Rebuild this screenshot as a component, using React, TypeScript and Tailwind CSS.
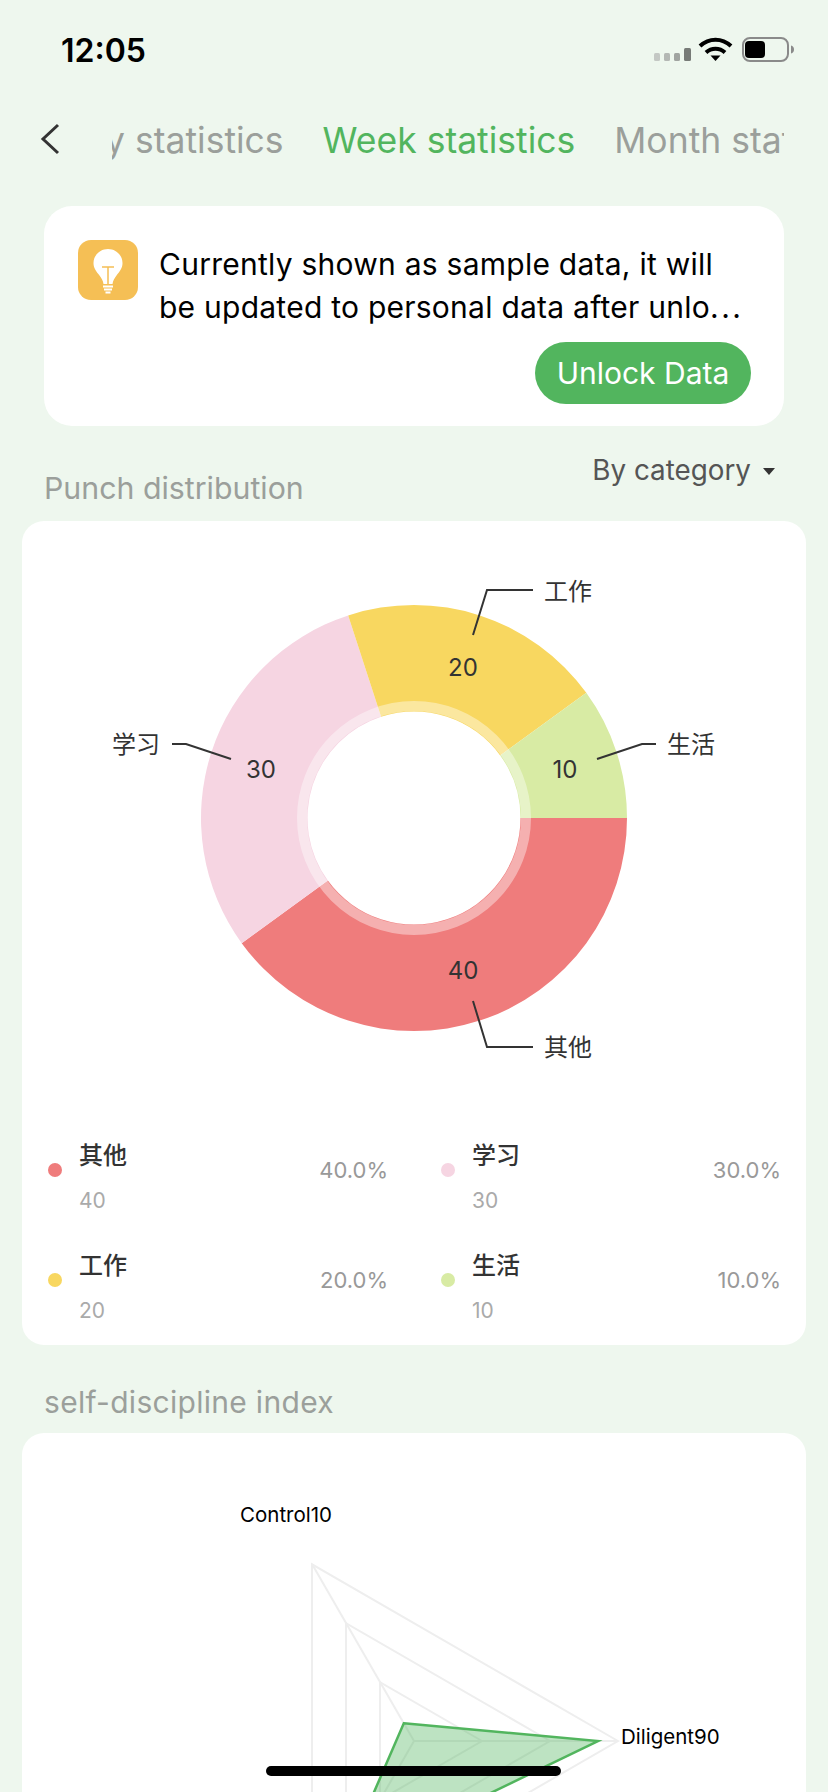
const CX = 414
const CY = 297

// donut slices in chart coordinates (degrees, clockwise from east)
const slices = [
  { name: '其他', value: 40, pct: '40.0%', color: '#ef7c7c', from: 0, to: 144 },
  { name: '学习', value: 30, pct: '30.0%', color: '#f6d5e2', from: 144, to: 252 },
  { name: '工作', value: 20, pct: '20.0%', color: '#f8d760', from: 252, to: 324 },
  { name: '生活', value: 10, pct: '10.0%', color: '#d8eba4', from: 324, to: 360 },
]

function arc(r0: number, r1: number, from: number, to: number) {
  const rad = (d: number) => (d * Math.PI) / 180
  const p = (r: number, d: number) => `${CX + r * Math.cos(rad(d))} ${CY + r * Math.sin(rad(d))}`
  const large = to - from > 180 ? 1 : 0
  return `M${p(r1, from)} A${r1} ${r1} 0 ${large} 1 ${p(r1, to)} L${p(r0, to)} A${r0} ${r0} 0 ${large} 0 ${p(r0, from)} Z`
}

function Donut() {
  return (
    <svg width="784" height="590" viewBox="22 0 784 590" className="block">
      {slices.map((s) => (
        <path key={s.name} d={arc(106.5, 213, s.from, s.to)} fill={s.color} />
      ))}
      <circle cx={CX} cy={CY} r="112" fill="none" stroke="#ffffff" strokeOpacity="0.4" strokeWidth="10" />
      <g fill="none" stroke="#333333" strokeWidth="2">
        <polyline points="473,114 487,69 533,69" />
        <polyline points="597,238 642,223 656,223" />
        <polyline points="231,238 186,223 172,223" />
        <polyline points="473,480 487,526 533,526" />
      </g>
      <g fill="#333333" fontSize="24" textAnchor="middle" dominantBaseline="central">
        <text x="463" y="146">20</text>
        <text x="261" y="248">30</text>
        <text x="565" y="248">10</text>
        <text x="463" y="449">40</text>
        <text x="568" y="70">工作</text>
        <text x="691" y="223">生活</text>
        <text x="136" y="223">学习</text>
        <text x="568" y="526">其他</text>
      </g>
    </svg>
  )
}

function Radar() {
  const tri = (r: number) => {
    const c = { x: 414, y: 308 }
    return [0, 120, 240]
      .map((a) => {
        const t = (a * Math.PI) / 180
        return `${c.x + r * Math.cos(t)},${c.y - r * Math.sin(t)}`
      })
      .join(' ')
  }
  return (
    <svg width="784" height="359" viewBox="22 0 784 359" className="block">
      <g fill="none" stroke="#eeeeee" strokeWidth="2">
        <polygon points={tri(204)} />
        <polygon points={tri(136)} />
        <polygon points={tri(68)} />
        <line x1="414" y1="308" x2="618" y2="308" />
        <line x1="414" y1="308" x2="312" y2="131" />
        <line x1="414" y1="308" x2="312" y2="485" />
      </g>
      <polygon
        points="403.8,290.3 598,308 342.6,431.7"
        fill="#52b55e"
        fillOpacity="0.38"
        stroke="#52b55e"
        strokeWidth="2.5"
      />
      <g fill="#000000" fontSize="20.5" dominantBaseline="central">
        <text x="240" y="81">Control10</text>
        <text x="621" y="303">Diligent90</text>
      </g>
    </svg>
  )
}

function Bulb() {
  return (
    <div className="flex h-[60px] w-[60px] shrink-0 items-center justify-center rounded-[13px] bg-[#f5bf55]">
      <svg width="36" height="56" viewBox="0 0 36 56">
        <path
          d="M18 7c8 0 14.500 6.200 14.500 14 0 5.500-3 8.500-6 12.500-2 2.600-3.500 5-4 8.500h-9c-.5-3.500-2-5.900-4-8.500-3-4-6-7-6-12.500C3.500 13.200 10 7 18 7z"
          fill="#ffffff"
        />
        <path d="M12 25h12M18 25v17" stroke="#f5bf55" strokeWidth="1.500" fill="none" />
        <path d="M13 44.500h10M14 47.500h8M15.500 50.500h5" stroke="#ffffff" strokeWidth="2" fill="none" />
      </svg>
    </div>
  )
}

function StatusIcons() {
  return (
    <svg width="145" height="30" viewBox="0 0 145 30" className="block">
      <rect x="0" y="17" width="6" height="8" rx="1.500" fill="#c4c8c4" />
      <rect x="10" y="17" width="6" height="8" rx="1.500" fill="#b4b8b4" />
      <rect x="20" y="17" width="6" height="8" rx="1.500" fill="#a0a4a0" />
      <rect x="30" y="12" width="7" height="13" rx="1.500" fill="#777b77" />
      <g fill="none" stroke="#000000" strokeWidth="4">
        <path d="M46 10c9-8.500 22-8.500 31 0" />
        <path d="M52 16.500c5.500-5 13.500-5 19 0" />
      </g>
      <path d="M56.500 19.500h10l-5 5.500z" fill="#000000" />
      <rect x="89" y="2" width="45" height="23" rx="7" fill="none" stroke="#8a8a8a" strokeWidth="2" />
      <rect x="91" y="5" width="20" height="17" rx="4" fill="#000000" />
      <path d="M137 9.500c2 .5 3 2 3 4s-1 3.500-3 4z" fill="#8a8a8a" />
    </svg>
  )
}

export default function App() {
  return (
    <div className="relative flex h-[1792px] w-[828px] flex-col overflow-hidden bg-[#eef7ee] font-['Inter','Noto_Sans_CJK_SC',sans-serif]">
      {/* status bar */}
      <div className="flex h-[98px] items-center justify-between pl-[61px] pr-[29px] pt-[4px]">
        <span className="text-[32px] font-semibold text-black">12:05</span>
        <StatusIcons />
      </div>

      {/* tabs */}
      <div className="flex h-[82px] items-center pl-[40px] pr-[44px]">
        <svg width="20" height="32" viewBox="0 0 20 32" className="shrink-0">
          <path d="M18 2 3 16l15 14" fill="none" stroke="#333333" strokeWidth="3" />
        </svg>
        <div className="ml-[52px] mt-[3px] min-w-0 flex-1 overflow-hidden">
          <div className="-ml-[52px] flex gap-[39px] whitespace-nowrap text-[35.500px] text-[#9b9f9b]">
            <span>Day statistics</span>
            <span className="text-[#52b55e]">Week statistics</span>
            <span>Month statistics</span>
          </div>
        </div>
      </div>

      {/* sample data notice */}
      <div className="mx-[44px] mt-[26px] h-[220px] rounded-[28px] bg-white pl-[34px] pr-[33px] pt-[34px]">
        <div className="flex gap-[21px]">
          <Bulb />
          <p className="mt-[3px] whitespace-nowrap text-[30px] leading-[43px] tracking-[0.25px] text-black">
            Currently shown as sample data, it will
            <br />
            be updated to personal data after unlo<span className="tracking-[2.5px]">...</span>
          </p>
        </div>
        <div className="mt-[13px] flex justify-end">
          <div className="flex h-[62px] w-[216px] items-center justify-center rounded-full bg-[#52b55e] text-[30px] text-white">
            Unlock Data
          </div>
        </div>
      </div>

      {/* punch distribution */}
      <div className="flex h-[95px] justify-between pl-[44px] pr-[53px]">
        <span className="mt-[40px] text-[30.300px] leading-[44px] text-[#9b9f9b]">Punch distribution</span>
        <span className="mt-[23px] flex h-[44px] items-center gap-[12px] text-[27.800px] text-[#555555]">
          By category
          <span className="h-0 w-0 border-x-[6px] border-t-[7px] border-x-transparent border-t-[#333333]" />
        </span>
      </div>

      <div className="mx-[22px] h-[824px] rounded-[22px] bg-white">
        <Donut />
        <div className="mt-[4px] grid grid-cols-2 gap-x-[53px] pl-[26px] pr-[25px]">
          {slices.map((s) => (
            <div key={s.name} className="flex h-[110px] items-center">
              <span className="h-[14px] w-[14px] rounded-full" style={{ backgroundColor: s.color }} />
              <div className="ml-[17px] mt-[16px] flex-1">
                <div className="text-[24px] font-medium leading-[30px] text-[#333333]">{s.name}</div>
                <div className="mt-[15px] text-[21px] leading-[30px] text-[#aaaaaa]">{s.value}</div>
              </div>
              <span className="text-[22px] text-[#999999]">{s.pct}</span>
            </div>
          ))}
        </div>
      </div>

      {/* self-discipline index */}
      <div className="flex h-[88px] pl-[44px]">
        <span className="mt-[36px] text-[30px] leading-[42px] tracking-[0.3px] text-[#9b9f9b]">
          self-discipline index
        </span>
      </div>

      <div className="mx-[22px] flex-1 rounded-t-[22px] bg-white">
        <Radar />
      </div>

      {/* home indicator */}
      <div className="absolute bottom-[16px] left-[266px] h-[10px] w-[295px] rounded-full bg-black" />
    </div>
  )
}
